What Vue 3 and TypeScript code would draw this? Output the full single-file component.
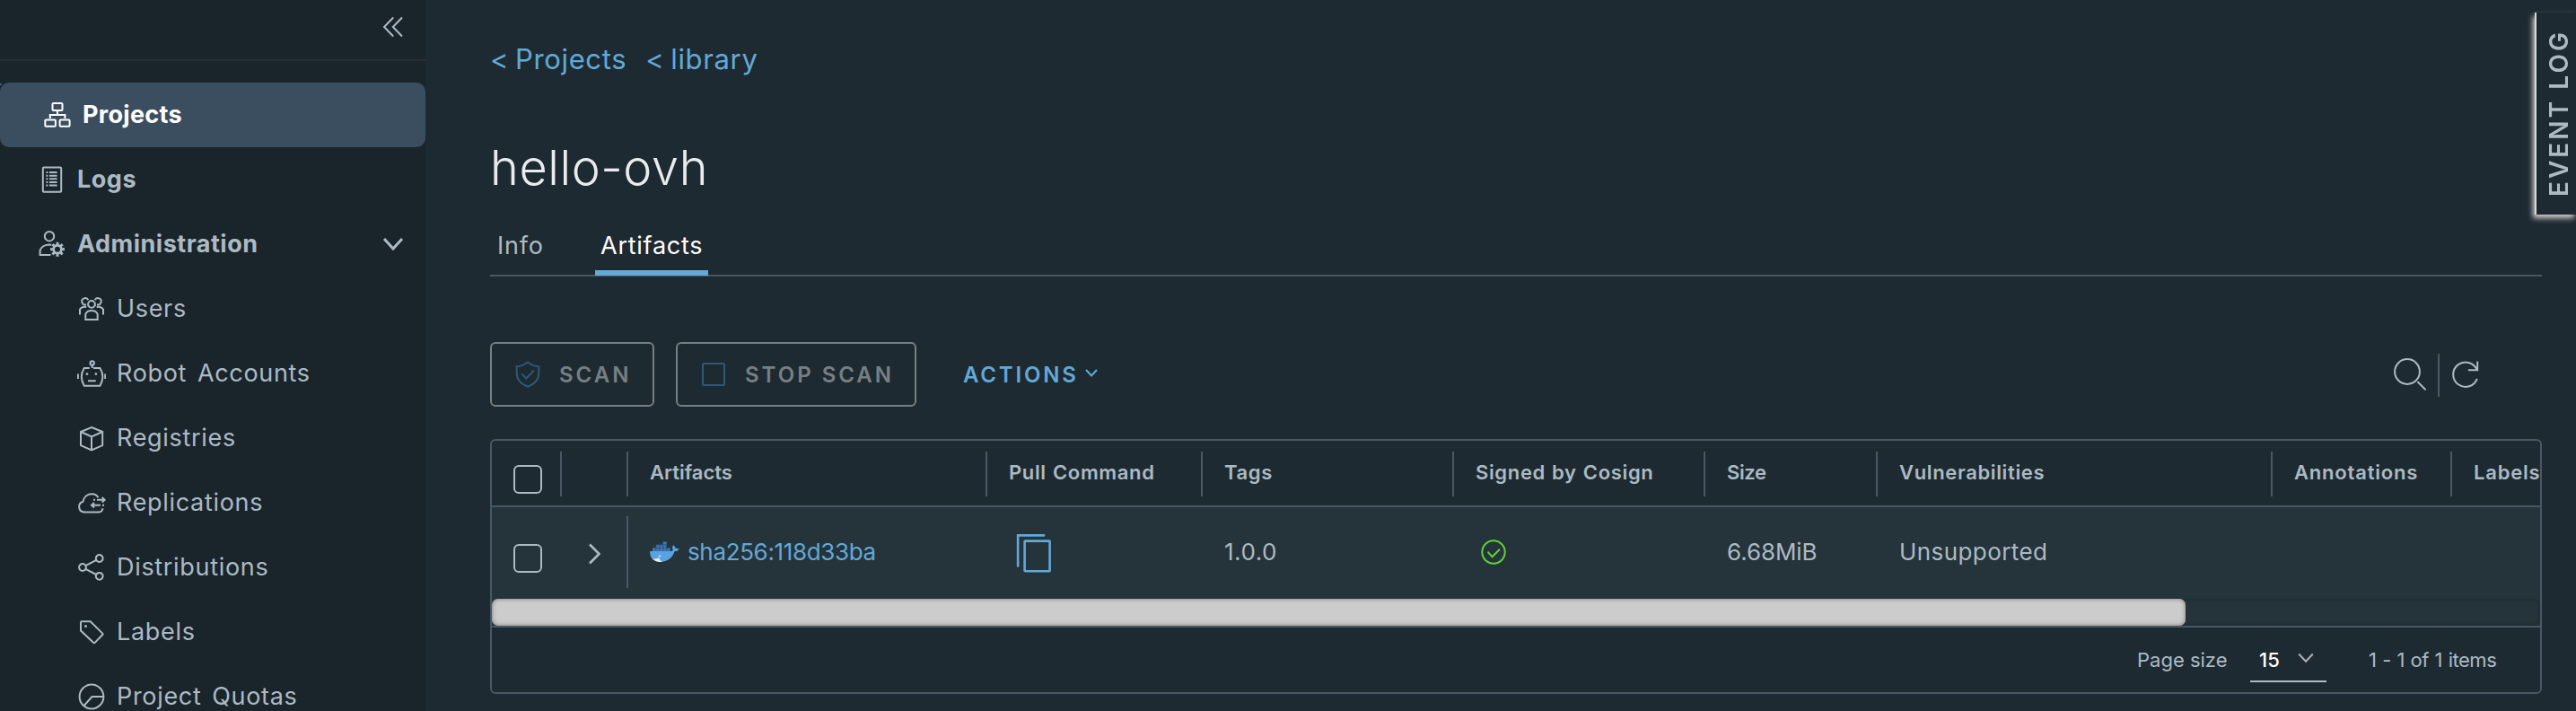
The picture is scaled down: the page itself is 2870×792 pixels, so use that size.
<script setup lang="ts">
interface NavItem {
  label: string
  stroke: string
  fill?: string
}

const circle = (cx: number, cy: number, r: number): string =>
  `M${cx - r} ${cy}a${r} ${r} 0 1 0 ${2 * r} 0a${r} ${r} 0 1 0 ${-2 * r} 0z`

/** Cog outline with a round hole, drawn with the even-odd rule. */
const gear = (cx: number, cy: number, outer: number, inner: number, hole: number): string => {
  const points: string[] = []
  for (let i = 0; i < 8; i++) {
    const a = (i * Math.PI) / 4
    const steps: [number, number][] = [[-0.24, inner], [-0.2, outer], [0.2, outer], [0.24, inner]]
    for (const [offset, r] of steps) {
      points.push(`${(cx + r * Math.cos(a + offset)).toFixed(2)} ${(cy + r * Math.sin(a + offset)).toFixed(2)}`)
    }
  }
  return `M${points.join('L')}z${circle(cx, cy, hole)}`
}

const topItems: NavItem[] = [
  {
    label: 'Projects',
    stroke:
      'M11.5 3h9a1 1 0 0 1 1 1v6a1 1 0 0 1-1 1h-9a1 1 0 0 1-1-1v-6a1 1 0 0 1 1-1zM3.3 21.4h9.6a1 1 0 0 1 1 1v5.3a1 1 0 0 1-1 1H3.3a1 1 0 0 1-1-1v-5.3a1 1 0 0 1 1-1zM19.6 21.4h9a1 1 0 0 1 1 1v5.3a1 1 0 0 1-1 1h-9a1 1 0 0 1-1-1v-5.3a1 1 0 0 1 1-1zM16 11v5M7.8 20v-4h16.6v4',
  },
  {
    label: 'Logs',
    stroke:
      'M6.8 2.4h18.4a1 1 0 0 1 1 1v25.4a1 1 0 0 1-1 1H6.8a1 1 0 0 1-1-1V3.4a1 1 0 0 1 1-1zM13 8h8.6M13 11.7h8.6M13 15.3h8.6M13 19h8.6M13 22.6h8.6M9.4 8h2M9.4 11.7h2M9.4 15.3h2M9.4 19h2M9.4 22.6h2',
  },
  {
    label: 'Administration',
    stroke: `${circle(13, 7.2, 5.2)}M14.5 28H2.600v-5.4c1.8-3.7 6-6 10.6-6l2 .1`,
    fill: gear(22, 21.7, 8.1, 5.8, 3),
  },
]

const subItems: NavItem[] = [
  {
    label: 'Users',
    stroke: `${circle(16, 10.9, 3.9)}M9.3 28.1v-6.2c1.2-2.6 3.7-3.9 6.7-3.9s5.5 1.3 6.7 3.9v6.2zM12.3 6.1A3.7 3.7 0 1 0 10 11.3M19.7 6.1A3.7 3.7 0 1 1 22 11.3M10.3 14c-3.4-.6-5.8.6-7.3 2.5v6M21.7 14c3.4-.6 5.8.6 7.3 2.5v6`,
  },
  {
    label: 'Robot Accounts',
    stroke: `${circle(16.7, 4.4, 2.2)}M16.7 6.6V10M13.7 10H7.8C3.8 16.5 3.8 23 7.8 29.7h17.6c4-6.7 4-13.2 0-19.7H18M.9 16.5v5.5M31.2 16.5v5.5M12 24.2h8.7`,
    fill: circle(11, 16.6, 1.4) + circle(20.9, 16.6, 1.4),
  },
  {
    label: 'Registries',
    stroke: 'M16 4L28.2 9V24.2L16 29.5L4 24.2V9zM4 9l12 5.5L28.2 9M16 14.5v15',
  },
  {
    label: 'Replications',
    stroke: 'M27.7 24.8q-1 1.6-3.2 1.6H7.3A6 6 0 0 1 6.5 14.7C7.5 9.3 11.6 6.2 16.2 6.2c3.2 0 5.8 1.5 7.3 3.9M18 12.8h2M22 12.8h8.7M27.7 10l3 2.8l-3 2.8M30 18.8h-2M26 18.8h-10M19 16l-3 2.8l3 2.8M28.5 22.2l-.8 2.6',
  },
  {
    label: 'Distributions',
    stroke: `${circle(24.7, 6, 3.9)}${circle(6, 16, 3.9)}${circle(24.7, 25.8, 3.9)}M9.5 14.2L21.2 7.8M9.5 17.8l11.7 6.2`,
  },
  {
    label: 'Labels',
    stroke: 'M5 4.2h9.7L28.3 17.6a1 1 0 0 1 0 1.4l-8.6 8.9a1 1 0 0 1-1.4 0L4 14.5V5.2a1 1 0 0 1 1-1z',
    fill: circle(9.5, 9.4, 1.5),
  },
  {
    label: 'Project Quotas',
    stroke: `${circle(16, 16, 13.4)}M29.4 16H16.5L7.7 26`,
  },
]

const crumbs = ['Projects', 'library']
const columns = ['Artifacts', 'Pull Command', 'Tags', 'Signed by Cosign', 'Size', 'Vulnerabilities', 'Annotations', 'Labels']
</script>

<template>
  <div class="app">
    <nav class="sidebar">
      <div class="collapse">
        <svg width="24" height="24" viewBox="0 0 24 24"><path d="M12.2 1.5L2 12l10.2 10.5M22 1.5L11.8 12L22 22.5" /></svg>
      </div>
      <a v-for="(item, i) in topItems" :key="item.label" class="item" :class="{ active: i === 0 }">
        <svg class="icon" width="32" height="32" viewBox="0 0 32 32">
          <path :d="item.stroke" />
          <path v-if="item.fill" class="solid" :d="item.fill" />
        </svg>
        <span class="label">{{ item.label }}</span>
        <svg v-if="item.label === 'Administration'" class="toggle" width="24" height="16" viewBox="0 0 24 16">
          <path d="M2 2l10 11L22 2" />
        </svg>
      </a>
      <a v-for="item in subItems" :key="item.label" class="item sub">
        <svg class="icon" width="32" height="32" viewBox="0 0 32 32">
          <path :d="item.stroke" />
          <path v-if="item.fill" class="solid" :d="item.fill" />
        </svg>
        <span class="label">{{ item.label }}</span>
      </a>
    </nav>

    <main class="main">
      <div class="crumbs">
        <a v-for="crumb in crumbs" :key="crumb"><i>&lt;</i>{{ crumb }}</a>
      </div>
      <h1>hello-ovh</h1>
      <div class="tabs">
        <a class="tab">Info</a>
        <a class="tab current">Artifacts</a>
      </div>

      <div class="toolbar">
        <button class="btn scan" disabled>
          <svg width="28" height="30" viewBox="0 0 28 30"><path d="M14 1.5C10 4.5 6 6 1.7 6.3V13.5C1.7 21 7 26 14 28.7C21 26 26.3 21 26.3 13.5V6.3C22 6 18 4.5 14 1.5zM7.5 14.5l4.8 5L21 10.5" /></svg>
          <span>SCAN</span>
        </button>
        <button class="btn stop" disabled>
          <svg width="26" height="26" viewBox="0 0 26 26"><rect x="1" y="1" width="24" height="24" rx="1" /></svg>
          <span>STOP SCAN</span>
        </button>
        <a class="actions">
          <span>ACTIONS</span>
          <svg width="16" height="12" viewBox="0 0 16 12"><path d="M2 2l6 6.5L14 2" /></svg>
        </a>
        <div class="tools">
          <svg width="38" height="38" viewBox="0 0 38 38"><circle cx="16" cy="16" r="13.9" /><path d="M28 27.8l8 8" stroke-linecap="round" /></svg>
          <span class="rule"></span>
          <svg width="30" height="32" viewBox="0 0 30 32"><path d="M27.8 20.8A13.7 13.7 0 1 1 27.6 11M17.9 11.2H28.2V1.5" /></svg>
        </div>
      </div>

      <section class="grid">
        <div class="row head">
          <div class="cell pick"><span class="box"></span></div>
          <div class="cell"></div>
          <div v-for="name in columns" :key="name" class="cell text">{{ name }}</div>
        </div>
        <div class="row body">
          <div class="cell pick"><span class="box"></span></div>
          <div class="cell expand">
            <svg width="15" height="24" viewBox="0 0 15 24"><path d="M2 1.5L12.5 12L2 22.5" /></svg>
          </div>
          <div class="cell text artifact">
            <svg width="33" height="24" viewBox="0 0 33 24">
              <path fill="#3f78b8" d="M3 7h3.8V3.8h7.6V.4h4.4v3.4h0V7h3.8v4.4H3z" />
              <path fill="none" stroke="#274866" stroke-width=".7" d="M6.9 4v7M10.7 4v7M14.6 1v10M18.7 4v7M3 7.3h19M7 3.9h12" />
              <path fill="#5aa2e0" d="M.2 11h22.6c1.8 0 2.6-.6 3-1.5c-1.1-1.7-.9-3.6.4-5.2c1.6 1 2.3 2.2 2.3 3.5c1.4-.3 2.9 0 4.1.8c-.9 1.8-2.6 2.7-5 2.7C25 18.6 19.8 22.9 11.7 22.9C3.6 22.9-.4 18 .2 11z" />
              <path fill="#e4eef6" d="M3.2 19.5c3 .3 5-.3 7-1.3c.3 1.8 1.6 3.5 3.7 4.5c-4.5.8-8.3-.6-10.7-3.2z" />
              <circle cx="10.9" cy="16.6" r="1.1" fill="#dfe9f2" />
            </svg>
            <a>sha256:118d33ba</a>
          </div>
          <div class="cell text copy">
            <svg width="40" height="44" viewBox="0 0 40 44"><path d="M2.1 36.5V2.4H31" stroke-linecap="round" /><rect x="9.6" y="8.6" width="28" height="33.6" rx=".5" /></svg>
          </div>
          <div class="cell text tag">1.0.0</div>
          <div class="cell text signed">
            <svg width="28" height="28" viewBox="0 0 28 28"><circle cx="14" cy="14" r="12.7" /><path d="M7.5 13.7l5 5.5l8.5-8.5" /></svg>
          </div>
          <div class="cell text size">6.68MiB</div>
          <div class="cell text">Unsupported</div>
        </div>
        <div class="track"><div class="thumb"></div></div>
        <footer class="foot">
          <span class="per">Page size</span>
          <span class="select">
            15
            <svg width="18" height="12" viewBox="0 0 18 12"><path d="M1.2 1.5L9 9.8l7.8-8.3" /></svg>
          </span>
          <span class="range">1 - 1 of 1 items</span>
        </footer>
      </section>
    </main>

    <aside class="events"><span>EVENT LOG</span></aside>
  </div>
</template>

<style>
body {
  background: #1e2a31;
}
</style>

<style scoped>
.app {
  position: relative;
  display: flex;
  width: 2870px;
  height: 792px;
  overflow: hidden;
  background: #1e2a31;
  color: #acbac3;
  font-family: Inter, "Liberation Sans", sans-serif;
}
svg {
  flex: none;
  display: block;
  fill: none;
  stroke: currentColor;
  stroke-width: 2;
}
.solid {
  fill: currentColor;
  fill-rule: evenodd;
  stroke: none;
}

.sidebar {
  flex: none;
  width: 474px;
  background: #1a242b;
}
.collapse {
  display: flex;
  justify-content: flex-end;
  box-sizing: border-box;
  height: 68px;
  padding: 18px 24px 0 0;
  margin-bottom: 24px;
  border-bottom: 2px solid #262e35;
}
.item {
  position: relative;
  display: flex;
  align-items: center;
  box-sizing: border-box;
  height: 72px;
  padding: 0 24px 0 42px;
  font-size: 27px;
  font-weight: 700;
  letter-spacing: 0.5px;
}
.item .icon {
  margin-right: 12px;
}
.label {
  flex: 1;
  padding-bottom: 2px;
}
.item.active {
  z-index: 0;
  padding-left: 48px;
  background: #3a4e5f;
  color: #fff;
  border-radius: 10px;
  letter-spacing: 0.3px;
}
.item.active::before {
  content: "";
  position: absolute;
  z-index: -1;
  left: 0;
  top: 1px;
  bottom: 1px;
  width: 2px;
  background: #2e74a5;
  -webkit-mask: radial-gradient(circle at 10px 36px, transparent 35px, #000 36px);
  mask: radial-gradient(circle at 10px 36px, transparent 35px, #000 36px);
}
.toggle {
  stroke-width: 3;
}
.item.sub {
  padding-left: 86px;
  font-weight: 400;
  letter-spacing: 0.68px;
  word-spacing: 3.5px;
}
.sub .label {
  flex: none;
}

.main {
  flex: none;
  width: 2286px;
  padding: 46px 0 0 72px;
}
.crumbs {
  display: flex;
  gap: 21px;
  height: 40px;
  color: #62a9d8;
  font-size: 31px;
  line-height: 40px;
  letter-spacing: 0.65px;
}
.crumbs i {
  display: inline-block;
  width: 28px;
  font-style: normal;
  line-height: 1;
}
h1 {
  margin: 69px 0 0;
  color: #e9ecef;
  font-size: 54px;
  font-weight: 350;
  line-height: 64px;
  letter-spacing: 0.6px;
}
.tabs {
  display: flex;
  height: 65px;
  margin-top: 22px;
  border-bottom: 2px solid #495865;
}
.tab {
  box-sizing: border-box;
  width: 117px;
  height: 66px;
  padding-left: 8px;
  font-size: 27px;
  line-height: 66px;
  letter-spacing: 0.75px;
}
.tab.current {
  width: 126px;
  padding-left: 6px;
  color: #fff;
  box-shadow: inset 0 -6px #62a9d8;
}

.toolbar {
  display: flex;
  align-items: center;
  height: 72px;
  margin-top: 73px;
}
.btn {
  display: flex;
  align-items: center;
  box-sizing: border-box;
  height: 72px;
  padding: 0;
  margin-right: 24px;
  border: 2px solid #777f82;
  border-radius: 6px;
  background: none;
  color: #777f82;
}
.btn svg {
  color: #2f5874;
}
.btn span,
.actions {
  font-family: Inter, "Liberation Sans", sans-serif;
  font-size: 24px;
  font-weight: 600;
  letter-spacing: 3px;
}
.scan {
  width: 183px;
  padding-left: 26px;
}
.scan svg {
  margin-right: 21px;
}
.stop {
  width: 268px;
  padding-left: 27px;
}
.stop svg {
  margin-right: 22px;
}
.actions {
  display: flex;
  align-items: center;
  margin-left: 28px;
  color: #62a9d8;
  letter-spacing: 2.8px;
}
.actions svg {
  margin: 0 0 2px 6px;
}
.tools {
  display: flex;
  align-items: center;
  margin: 0 70px 0 auto;
}
.rule {
  width: 2px;
  height: 48px;
  margin: 2px 14px 0 12px;
  background: #495865;
}

.grid {
  box-sizing: border-box;
  height: 284px;
  margin-top: 36px;
  border: 2px solid #495865;
  border-radius: 6px;
  overflow: hidden;
}
.row {
  display: grid;
  grid-template-columns: 78px 74px 400px 240px 280px 280px 192px 440px 200px 98px;
}
.cell {
  display: flex;
  align-items: center;
  min-width: 0;
  white-space: nowrap;
}
.head {
  height: 72px;
  border-bottom: 2px solid #495865;
  font-size: 22px;
  font-weight: 600;
  letter-spacing: 0.65px;
  word-spacing: 1px;
}
.head .cell {
  margin: 12px 0 10px;
  border-right: 2px solid #495865;
}
.head .cell:last-child {
  border-right: 0;
}
.head .cell:nth-child(3) {
  letter-spacing: 0;
}
.head .cell:nth-child(7) {
  letter-spacing: -0.4px;
}
.head .cell:nth-child(n + 9) {
  letter-spacing: 0.8px;
}
.text {
  padding: 0 0 4px 24px;
}
.pick {
  padding-left: 24px;
}
.box {
  box-sizing: border-box;
  width: 32px;
  height: 32px;
  margin-top: 12px;
  border: 2px solid #acbac3;
  border-radius: 6px;
}
.body {
  height: 102px;
  background: #25333a;
  font-size: 26px;
  letter-spacing: 0.42px;
}
.body .cell {
  margin: 10px 0 12px;
}
.body .text {
  padding-bottom: 2px;
}
.body .box {
  margin-top: 14px;
}
.body .expand {
  padding: 4px 0 0 29px;
  border-right: 2px solid #495865;
}
.expand svg {
  stroke-width: 2.6;
}
.artifact {
  color: #62a9d8;
  letter-spacing: -0.35px;
}
.artifact svg {
  margin: 2px 9px 0 0;
  stroke: none;
}
.copy {
  color: #62a9d8;
}
.copy svg {
  margin: 4px 0 0 7.5px;
  stroke-width: 2.6;
}
.tag {
  letter-spacing: 0.5px;
}
.signed {
  color: #60d334;
}
.signed svg {
  margin: 2px 0 0 6px;
}
.size {
  letter-spacing: -0.1px;
}
.track {
  height: 30px;
  border-radius: 7px;
  background: #25333a;
  box-shadow: inset 0 0 4px #1b262c, 0 0 0 7px #25333a;
  clip-path: inset(0);
}
.thumb {
  width: 1887px;
  height: 30px;
  border-radius: 7px;
  background: #ccc;
  box-shadow: inset 0 0 5px #777;
}
.foot {
  display: flex;
  align-items: center;
  justify-content: flex-end;
  height: 72px;
  border-top: 2px solid #495865;
  padding-right: 48px;
  font-size: 22px;
}
.per {
  width: 126px;
}
.select {
  display: flex;
  align-items: center;
  align-self: flex-start;
  justify-content: space-between;
  box-sizing: border-box;
  width: 85px;
  height: 50px;
  padding: 2px 14px 0 10px;
  margin: 11px 47px 0 0;
  border-bottom: 2px solid #acbac3;
  color: #fff;
  font-weight: 500;
}
.select svg {
  margin-bottom: 5px;
  color: #acb0b3;
}
.range {
  width: 143px;
  white-space: nowrap;
  letter-spacing: -0.5px;
  word-spacing: 1px;
}

.events {
  position: absolute;
  top: 14px;
  right: 0;
  display: flex;
  align-items: center;
  justify-content: center;
  box-sizing: border-box;
  width: 46px;
  height: 225px;
  padding-left: 5px;
  border-left: 2px solid #d5dade;
  background: #1e2a31;
  box-shadow: -2px 4px 6px #d2cdd0;
}
.events span {
  writing-mode: vertical-rl;
  transform: rotate(180deg);
  font-size: 28px;
  font-weight: 600;
  line-height: 34px;
  letter-spacing: 3.05px;
  white-space: nowrap;
}
</style>
